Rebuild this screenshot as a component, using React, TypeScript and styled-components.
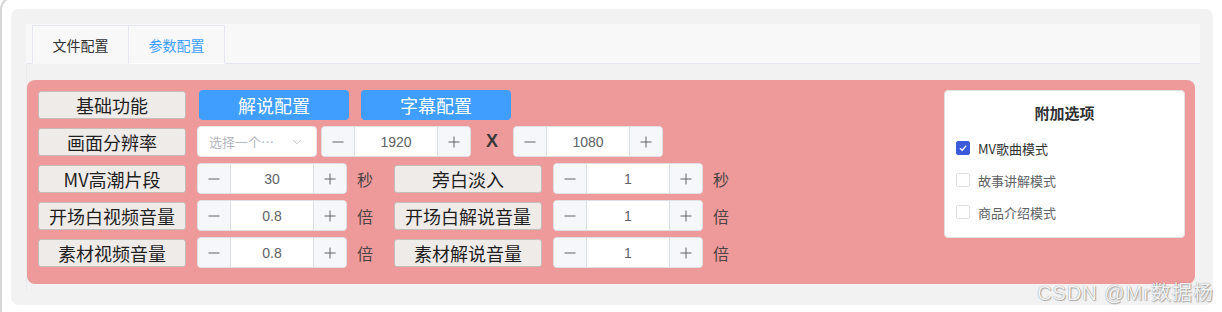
import React from 'react';
import styled, { createGlobalStyle, css } from 'styled-components';
import { ChevronDown } from 'lucide-react';

const GlobalStyle = createGlobalStyle`
  html, body {
    margin: 0;
    padding: 0;
    background: #ffffff;
    overflow: hidden;
  }

  body {
    font-family: 'Noto Sans CJK SC', 'Liberation Sans', sans-serif;
  }
`;

const CJK = `'Noto Sans CJK SC', 'Liberation Sans', sans-serif`;
const NUM = `'Liberation Sans', 'Noto Sans CJK SC', sans-serif`;

export default function App() {
  return (
    <>
      <GlobalStyle />
      <Frame>
        <Card>
          <TabHeader>
            <Tab>文件配置</Tab>
            <Tab $active>参数配置</Tab>
          </TabHeader>
          <TabContent>
            <Panel>
              <Form>
                <Row>
                  <FieldLabel>基础功能</FieldLabel>
                  <BlueButton>解说配置</BlueButton>
                  <BlueButton>字幕配置</BlueButton>
                </Row>
                <Row>
                  <FieldLabel>画面分辨率</FieldLabel>
                  <Select>
                    <Placeholder>选择一个…</Placeholder>
                    <ChevronDown size={14} strokeWidth={1.5} color="#b4b7be" />
                  </Select>
                  <NumberInput value="1920" />
                  <Times>X</Times>
                  <NumberInput value="1080" />
                </Row>
                <Row>
                  <FieldLabel>MV高潮片段</FieldLabel>
                  <NumberInput value="30" />
                  <Unit>秒</Unit>
                  <FieldLabel>旁白淡入</FieldLabel>
                  <NumberInput value="1" />
                  <Unit>秒</Unit>
                </Row>
                <Row>
                  <FieldLabel>开场白视频音量</FieldLabel>
                  <NumberInput value="0.8" />
                  <Unit>倍</Unit>
                  <FieldLabel>开场白解说音量</FieldLabel>
                  <NumberInput value="1" />
                  <Unit>倍</Unit>
                </Row>
                <Row>
                  <FieldLabel>素材视频音量</FieldLabel>
                  <NumberInput value="0.8" />
                  <Unit>倍</Unit>
                  <FieldLabel>素材解说音量</FieldLabel>
                  <NumberInput value="1" />
                  <Unit>倍</Unit>
                </Row>
              </Form>

              <OptionsBox>
                <OptionsTitle>附加选项</OptionsTitle>
                <CheckRow $checked>
                  <CheckBox $checked>
                    <svg width="10" height="10" viewBox="0 0 10 10">
                      <path d="M2 5.2 L4.2 7.3 L8.2 2.8" fill="none" stroke="#fff" strokeWidth="1.3" />
                    </svg>
                  </CheckBox>
                  MV歌曲模式
                </CheckRow>
                <CheckRow>
                  <CheckBox />
                  故事讲解模式
                </CheckRow>
                <CheckRow>
                  <CheckBox />
                  商品介绍模式
                </CheckRow>
              </OptionsBox>
            </Panel>
          </TabContent>
        </Card>
        <Watermark>CSDN @Mr数据杨</Watermark>
      </Frame>
    </>
  );
}

const NumberInput: React.FC<{ value: string }> = ({ value }) => (
  <NumberBox>
    <StepButton $side="left">
      <svg width="12" height="12" viewBox="0 0 12 12">
        <path d="M0.5 6 H11.5" stroke="#606266" strokeWidth="1" />
      </svg>
    </StepButton>
    <NumberValue>{value}</NumberValue>
    <StepButton $side="right">
      <svg width="12" height="12" viewBox="0 0 12 12">
        <path d="M0.5 6 H11.5 M6 0.5 V11.5" stroke="#606266" strokeWidth="1" />
      </svg>
    </StepButton>
  </NumberBox>
);

const Frame = styled.div`
  position: relative;
  box-sizing: border-box;
  height: 315px;
  margin-top: -3px;
  padding: 10px 0 0 9px;
  border-left: 2px solid #d6d6d6;
  border-top: 2px solid #d6d6d6;
  border-top-left-radius: 12px;
`;

const Card = styled.div`
  box-sizing: border-box;
  width: 1202px;
  height: 296px;
  padding: 15px 13px 0 15px;
  background: #f2f2f2;
  border-radius: 8px;
`;

const TabHeader = styled.div`
  display: flex;
  align-items: flex-end;
  box-sizing: border-box;
  height: 40px;
  padding-left: 6px;
  background: #f8f8f8;
  border-bottom: 1px solid #e4e7ed;
`;

const Tab = styled.div<{ $active?: boolean }>`
  display: flex;
  align-items: center;
  justify-content: center;
  box-sizing: border-box;
  width: 97px;
  height: 39px;
  margin-bottom: -1px;
  border: 1px solid #e4e7ed;
  border-bottom: 1px solid transparent;
  background: #f8f8f8;
  color: #303133;
  font-family: ${CJK};
  font-size: 14px;

  & + & {
    margin-left: -1px;
  }

  ${({ $active }) =>
    $active &&
    css`
      color: #409eff;
      border-bottom-color: #ffffff;
    `};
`;

const TabContent = styled.div`
  box-sizing: border-box;
  height: 226px;
  padding: 16px 5px 0 0;
  border-left: 1px solid #ebebeb;
`;

const Panel = styled.div`
  display: flex;
  justify-content: space-between;
  align-items: flex-start;
  box-sizing: border-box;
  height: 204px;
  padding: 9px 10px 16px 11px;
  background: #ef9a9a;
  border-radius: 8px;
`;

const Form = styled.div`
  display: flex;
  flex-direction: column;
  gap: 6px;
`;

const Row = styled.div`
  display: flex;
  align-items: center;
  height: 31px;
`;

const FieldLabel = styled.div`
  display: flex;
  align-items: center;
  justify-content: center;
  box-sizing: border-box;
  width: 148px;
  height: 28px;
  margin-right: 11px;
  background: #efebe9;
  border: 1px solid #c6bdb9;
  border-radius: 3px;
  color: #1f1f1f;
  font-family: ${CJK};
  font-size: 18px;
  white-space: nowrap;
`;

const BlueButton = styled.div`
  display: flex;
  align-items: center;
  justify-content: center;
  width: 150px;
  height: 30px;
  margin-left: 2px;
  background: #409eff;
  border-radius: 4px;
  color: #ffffff;
  font-family: ${CJK};
  font-size: 18px;

  & + & {
    margin-left: 12px;
  }
`;

const Select = styled.div`
  display: flex;
  align-items: center;
  justify-content: space-between;
  box-sizing: border-box;
  width: 120px;
  height: 31px;
  margin-right: 4px;
  padding: 0 12px 0 11px;
  background: #ffffff;
  border: 1px solid #e4e7ed;
  border-radius: 4px;
`;

const Placeholder = styled.span`
  color: #b4b7be;
  font-family: ${CJK};
  font-size: 13px;
`;

const Times = styled.span`
  width: 42px;
  text-align: center;
  color: #3a3a3a;
  font-family: ${NUM};
  font-size: 18px;
  font-weight: 700;
`;

const NumberBox = styled.div`
  display: flex;
  box-sizing: border-box;
  width: 150px;
  height: 31px;
  background: #ffffff;
  border: 1px solid #dcdfe6;
  border-radius: 4px;
  overflow: hidden;
`;

const StepButton = styled.div<{ $side: 'left' | 'right' }>`
  display: flex;
  align-items: center;
  justify-content: center;
  width: 32px;
  background: #f5f7fa;

  ${({ $side }) =>
    $side === 'left'
      ? css`
          border-right: 1px solid #dcdfe6;
        `
      : css`
          border-left: 1px solid #dcdfe6;
        `};
`;

const NumberValue = styled.div`
  flex: 1;
  display: flex;
  align-items: center;
  justify-content: center;
  color: #606266;
  font-family: ${NUM};
  font-size: 14px;
`;

const Unit = styled.span`
  width: 16px;
  margin: 0 21px 0 10px;
  color: #4d4444;
  font-family: ${CJK};
  font-size: 16px;
`;

const OptionsBox = styled.div`
  box-sizing: border-box;
  width: 241px;
  height: 148px;
  margin-top: 1px;
  padding: 12px 11px 0;
  background: #ffffff;
  border: 1px solid #e0e0e0;
  border-radius: 4px;
`;

const OptionsTitle = styled.div`
  height: 20px;
  margin-bottom: 9px;
  line-height: 20px;
  text-align: center;
  color: #303133;
  font-family: ${CJK};
  font-size: 15px;
  font-weight: 700;
`;

const CheckRow = styled.div<{ $checked?: boolean }>`
  display: flex;
  align-items: center;
  gap: 8px;
  height: 32px;
  color: ${({ $checked }) => ($checked ? '#303133' : '#606266')};
  font-family: ${CJK};
  font-size: 13px;
`;

const CheckBox = styled.span<{ $checked?: boolean }>`
  display: flex;
  align-items: center;
  justify-content: center;
  box-sizing: border-box;
  width: 14px;
  height: 14px;
  border: 1px solid ${({ $checked }) => ($checked ? '#3b5bdb' : '#dcdfe6')};
  border-radius: 2px;
  background: ${({ $checked }) => ($checked ? '#3b5bdb' : '#ffffff')};
`;

const Watermark = styled.div`
  position: absolute;
  right: 8px;
  bottom: 6px;
  color: rgba(255, 255, 255, 0.92);
  font-family: ${NUM};
  font-size: 20px;
  letter-spacing: 1px;
  text-shadow: 0 0 1px rgba(0, 0, 0, 0.45), 1px 1px 1px rgba(0, 0, 0, 0.25);
  white-space: nowrap;
`;
